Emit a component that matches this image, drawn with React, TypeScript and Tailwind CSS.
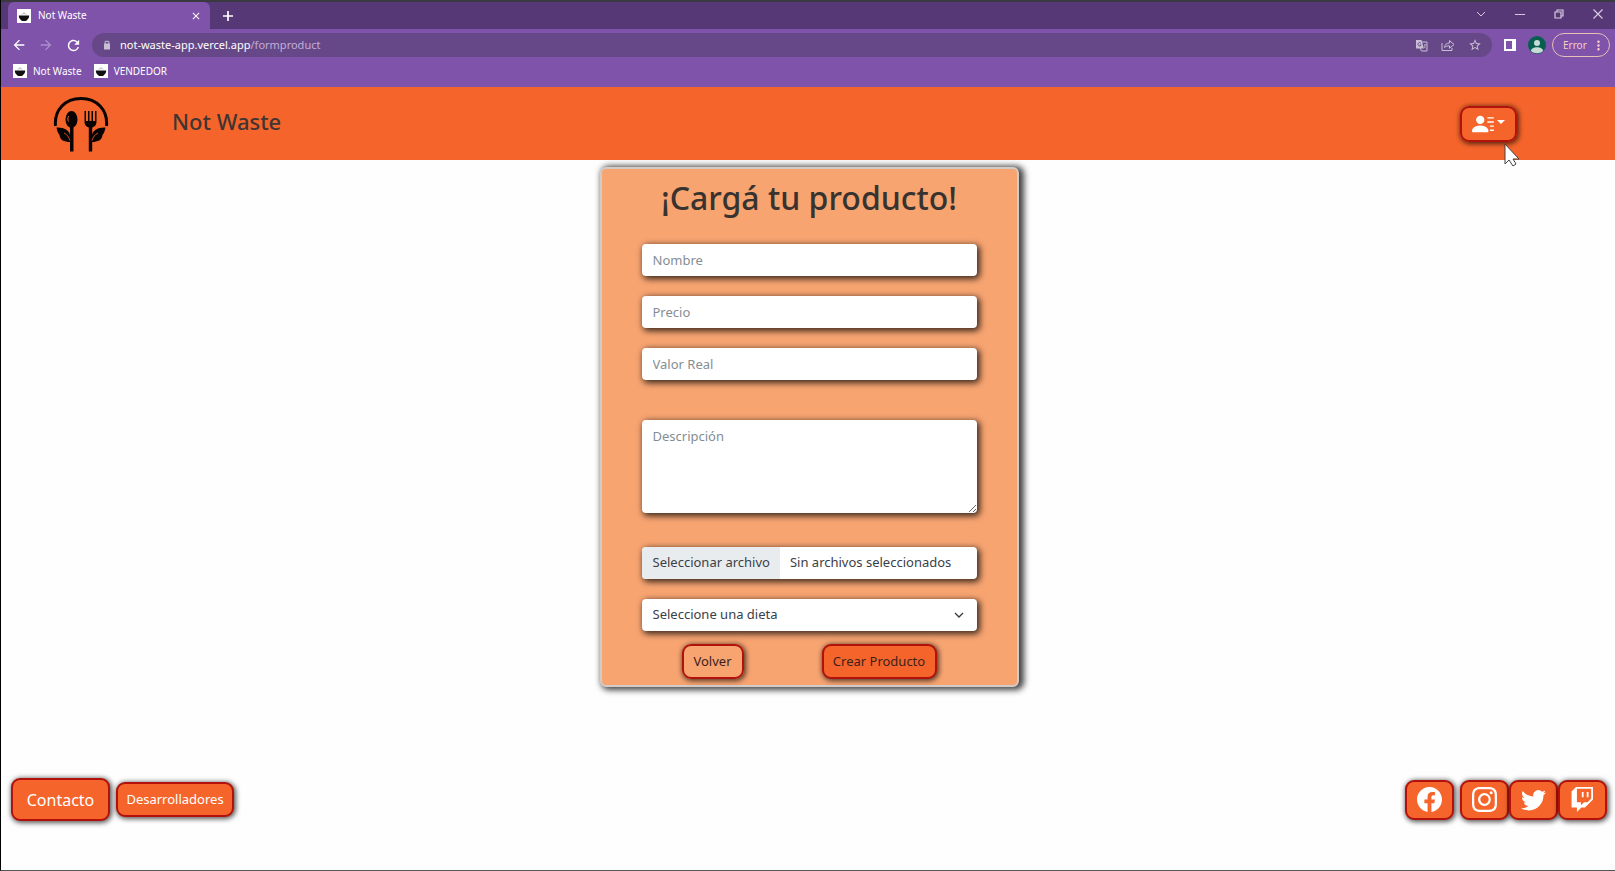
import type { ReactNode } from "react";
import { BsFacebook, BsInstagram, BsPersonLinesFill, BsTwitch, BsTwitter } from "react-icons/bs";
import {
  MdArrowBack,
  MdArrowForward,
  MdClose,
  MdMoreVert,
  MdOutlineStarBorder,
  MdRefresh,
} from "react-icons/md";

const field =
  "block w-full rounded bg-white px-[11px] text-[13px] text-[#3b4046] placeholder:text-[#858d94] shadow-[2px_2px_6px_1px_rgba(0,0,0,0.75)] outline-none";
const action =
  "flex items-center justify-center rounded-[9px] border-2 border-[#b3120c] shadow-[1px_1px_5px_1px_rgba(0,0,0,0.65)]";

function Bowl() {
  return (
    <svg viewBox="0 0 14 14" className="size-[14px] shrink-0" aria-hidden="true">
      <rect width="14" height="14" fill="#fff" />
      <path d="M1.800 6.500h10.400c0 2.600-1.200 4-2.700 4.700v.8h-5v-.8C3 10.500 1.800 9.100 1.800 6.500z" fill="#111" />
      <path d="M4.500 5.300c1-.9 4-.9 5 0M7 3v1.500" stroke="#aaa" strokeWidth=".7" fill="none" />
    </svg>
  );
}

function Logo() {
  return (
    <svg viewBox="0 0 56 56" className="size-14" role="img" aria-label="Not Waste">
      <path d="M2.500 30C1 14 12 2.500 28 2.500S55 14 53.500 30" fill="none" stroke="#090403" strokeWidth="3" />
      <g fill="#090403">
        <ellipse cx="18.500" cy="23.500" rx="6" ry="8.500" />
        <path d="M17 29h3.500v26.500H17z" />
        <path d="M3.500 31.500c7-.5 13.500 3 13.500 8V46c-6 0-10-2-10.500-7-1.500-2-2.500-4.500-3-7.500z" />
        <path d="M31.500 15H33v10h2V15h1.500v10h2V15H40v10h2V15h1.500v11c0 3-2 5-4.300 5.500v24h-3.400v-24C33.500 31 31.500 29 31.500 26z" />
        <path d="M52.500 31.500c-7-.5-13.500 3-13.500 8V46c6 0 10-2 10.500-7 1.500-2 2.500-4.500 3-7.500z" />
      </g>
      <path d="M11 37c3 1.500 5 4 6 7.500M45 37c-3 1.500-5 4-6 7.500" stroke="#f5652b" strokeWidth=".8" fill="none" />
      <path d="M15.500 20c-.8 2-.8 4 0 5.500" stroke="#f5652b" strokeWidth="1" fill="none" />
    </svg>
  );
}

function Browser() {
  return (
    <div className="bg-[#7f53aa] text-white">
      <div className="flex h-[29px] border-t-2 border-[#3b3940] bg-[#563876]">
        <div className="ml-[7px] flex w-[202px] items-center rounded-t-md bg-[#7f53aa] pr-2 pl-[9px]">
          <Bowl />
          <span className="ml-[7px] flex-1 text-[10px]">Not Waste</span>
          <button aria-label="Cerrar pestaña"><MdClose className="size-3" /></button>
        </div>
        <button aria-label="Nueva pestaña" className="ml-3">
          <svg viewBox="0 0 12 12" className="size-3"><path d="M6 1v10M1 6h10" stroke="#fff" strokeWidth="1.700" /></svg>
        </button>
        <div className="ml-auto flex items-center gap-[29px] pr-3 pb-1 text-[#d5cbe0]">
          <button aria-label="Buscar pestañas">
            <svg viewBox="0 0 10 10" className="size-[10px]"><path d="M1 3l4 4 4-4" fill="none" stroke="currentColor" /></svg>
          </button>
          <button aria-label="Minimizar">
            <svg viewBox="0 0 10 10" className="size-[10px]"><path d="M0 5.500h10" stroke="currentColor" /></svg>
          </button>
          <button aria-label="Restaurar">
            <svg viewBox="0 0 10 10" className="size-[10px]"><path d="M1 3h6v6H1zM3 3V1h6v6H7" fill="none" stroke="currentColor" strokeWidth="1.200" /></svg>
          </button>
          <button aria-label="Cerrar">
            <svg viewBox="0 0 10 10" className="size-[10px]"><path d="M.5.500l9 9M9.500.500l-9 9" stroke="currentColor" strokeWidth="1.200" /></svg>
          </button>
        </div>
      </div>
      <div className="flex h-8 items-center pr-[5px] pl-[10px]">
        <button aria-label="Atrás"><MdArrowBack className="size-4" /></button>
        <button aria-label="Adelante" className="ml-[11px] text-[#ab8ecb]"><MdArrowForward className="size-4" /></button>
        <button aria-label="Recargar" className="ml-[11px]"><MdRefresh className="size-[17px]" /></button>
        <div className="ml-[10px] flex h-6 flex-1 items-center rounded-full bg-[#664889] px-[10px] text-[#c9bfd4]">
          <svg viewBox="0 0 10 10" className="size-[10px]" aria-hidden="true">
            <path d="M2 3.500h6V9.500H2z" fill="currentColor" />
            <path d="M3.200 4V1.300h3.600V4" fill="none" stroke="currentColor" strokeWidth="1" />
          </svg>
          <span className="ml-2 flex-1 text-[11px] text-[#c3add9]">
            <span className="text-white">not-waste-app.vercel.app</span>/formproduct
          </span>
          <div className="flex items-center gap-[13px]">
            <button aria-label="Traducir">
              <svg viewBox="0 0 13 13" className="size-[13px]">
                <path d="M5 3h7v9H6.500L5 9" fill="none" stroke="currentColor" strokeWidth="1" />
                <path d="M1 1h5.500l2.300 8.500H1z" fill="currentColor" />
                <path d="M6 4.300A1.700 1.700 0 1 0 6.200 6H4.600" fill="none" stroke="#664889" strokeWidth=".9" />
                <path d="M9 6h2.500M10 5v1c0 1.500-.5 2.500-1 3M9 7.500l2 2" stroke="currentColor" strokeWidth=".7" fill="none" />
              </svg>
            </button>
            <button aria-label="Compartir">
              <svg viewBox="0 0 14 14" className="size-[14px]" fill="none" stroke="currentColor" strokeWidth="1">
                <path d="M1 5v7.500h10V10M3.500 9.500c.5-3 2-4.500 5-4.500V2.500l4.500 4-4.500 3.800V7.800c-2 0-3.500.4-5 1.700z" />
              </svg>
            </button>
            <button aria-label="Favorito"><MdOutlineStarBorder className="size-[14px]" /></button>
          </div>
        </div>
        <button aria-label="Panel lateral" className="ml-3">
          <svg viewBox="0 0 12 12" className="size-3"><path d="M1 1h10v10H1z" fill="none" stroke="#fff" strokeWidth="2" /><path d="M8 1h3v10H8z" fill="#fff" /></svg>
        </button>
        <button aria-label="Perfil" className="ml-3">
          <svg viewBox="0 0 18 18" className="size-[18px]"><circle cx="9" cy="9" r="9" fill="#075f50" /><circle cx="9" cy="7" r="3" fill="#c7dcd6" /><path d="M3 15c0-5 12-5 12 0-3 3-9 3-12 0z" fill="#c7dcd6" /></svg>
        </button>
        <button className="ml-[6px] flex h-6 w-[58px] items-center justify-between rounded-full border border-[#e6bfb9] pr-[3px] pl-[10px] text-[10px] text-[#f3cdc6]">
          Error<MdMoreVert className="size-[15px]" />
        </button>
      </div>
      <nav className="flex h-[26px] items-start gap-3 pt-[3px] pl-3 text-[10px] leading-[15px]">
        <a href="#inicio" className="flex gap-[6px]"><Bowl />Not Waste</a>
        <a href="#vendedor" className="flex gap-[6px]"><Bowl />VENDEDOR</a>
      </nav>
    </div>
  );
}

function Social({ label, children }: { label: string; children: ReactNode }) {
  return (
    <a href={"#" + label} aria-label={label} className={`${action} h-10 w-[49px] bg-[#f5652b] text-white`}>
      {children}
    </a>
  );
}

export default function App() {
  return (
    <div className="flex min-h-screen flex-col border-b border-l border-b-[#555] border-l-black bg-[#fefefe] font-['Noto_Sans',sans-serif]">
      <Browser />
      <header className="relative flex h-[73px] items-center bg-[#f5652b] pr-[98px] pl-[52px]">
        <Logo />
        <a href="#inicio" className="ml-[63px] pb-1 text-[22px] font-medium text-[#403532]">Not Waste</a>
        <button aria-label="Menú de usuario" className={`${action} ml-auto h-9 w-[57px] gap-[3px] text-white`}>
          <BsPersonLinesFill className="size-[22px]" />
          <svg viewBox="0 0 8 4" className="mb-1 h-1 w-2"><path d="M0 0h8L4 4z" fill="currentColor" /></svg>
        </button>
        <svg viewBox="0 0 16 24" className="absolute top-[56px] right-[95px] h-6 w-4" aria-hidden="true">
          <path d="M1 1v20l4-4 4 6 3-2-3-5h6z" fill="#fff" stroke="#44403e" strokeWidth="1" />
        </svg>
      </header>

      <main className="flex flex-1 justify-center pt-[7px] pl-[2px]">
        <form className="h-fit w-[419px] rounded-md border-2 border-[#d2cbc8] bg-[#f7a471] px-10 pb-[6px] shadow-[3px_1px_6px_2px_rgba(0,0,0,0.75)]" onSubmit={(e) => e.preventDefault()}>
          <h1 className="pt-[7px] text-center text-[32px] leading-[44px] font-medium whitespace-nowrap text-[#38332f]">¡Cargá tu producto!</h1>
          <div className="mt-6 flex flex-col gap-5">
            <input aria-label="Nombre" placeholder="Nombre" className={`${field} h-8`} />
            <input aria-label="Precio" placeholder="Precio" className={`${field} h-8`} />
            <input aria-label="Valor Real" placeholder="Valor Real" className={`${field} h-8`} />
          </div>
          <textarea aria-label="Descripción" placeholder="Descripción" className={`${field} mt-10 h-[93px] resize-y py-[6px] leading-5`} />
          <label className={`${field} relative mt-[34px] flex h-8 items-stretch overflow-hidden pl-0`}>
            <input type="file" className="sr-only" />
            <span className="flex items-center bg-[#e9ecef] pr-[10px] pl-[11px]">Seleccionar archivo</span>
            <span className="flex items-center pl-[10px]">Sin archivos seleccionados</span>
          </label>
          <div className="relative mt-5">
            <select aria-label="Dieta" className={`${field} h-8 appearance-none`}>
              <option>Seleccione una dieta</option>
            </select>
            <svg viewBox="0 0 10 6" className="pointer-events-none absolute top-[13px] right-[13px] h-[6px] w-[10px]"><path d="M1 1l4 4 4-4" fill="none" stroke="#343a40" strokeWidth="1.300" /></svg>
          </div>
          <div className="mt-[13px] flex justify-between px-10 text-[13px] text-[#40221a]">
            <button type="button" className={`${action} h-[35px] w-[62px]`}>Volver</button>
            <button type="submit" className={`${action} h-[35px] w-[115px] bg-[#f5652b] whitespace-nowrap`}>Crear Producto</button>
          </div>
        </form>
      </main>

      <footer className="flex items-center justify-between pr-2 pb-[49px] pl-[10px] text-white">
        <div className="flex items-center gap-[6px]">
          <a href="#contacto" className={`${action} h-[43px] w-[99px] bg-[#f5652b] text-base`}>Contacto</a>
          <a href="#desarrolladores" className={`${action} h-[35px] w-[118px] bg-[#f5652b] text-[13px]`}>Desarrolladores</a>
        </div>
        <div className="flex">
          <div className="mr-[6px]"><Social label="Facebook"><BsFacebook className="size-[25px]" /></Social></div>
          <Social label="Instagram"><BsInstagram className="size-[25px]" /></Social>
          <Social label="Twitter"><BsTwitter className="size-[25px]" /></Social>
          <Social label="Twitch"><BsTwitch className="size-[25px]" /></Social>
        </div>
      </footer>
    </div>
  );
}
